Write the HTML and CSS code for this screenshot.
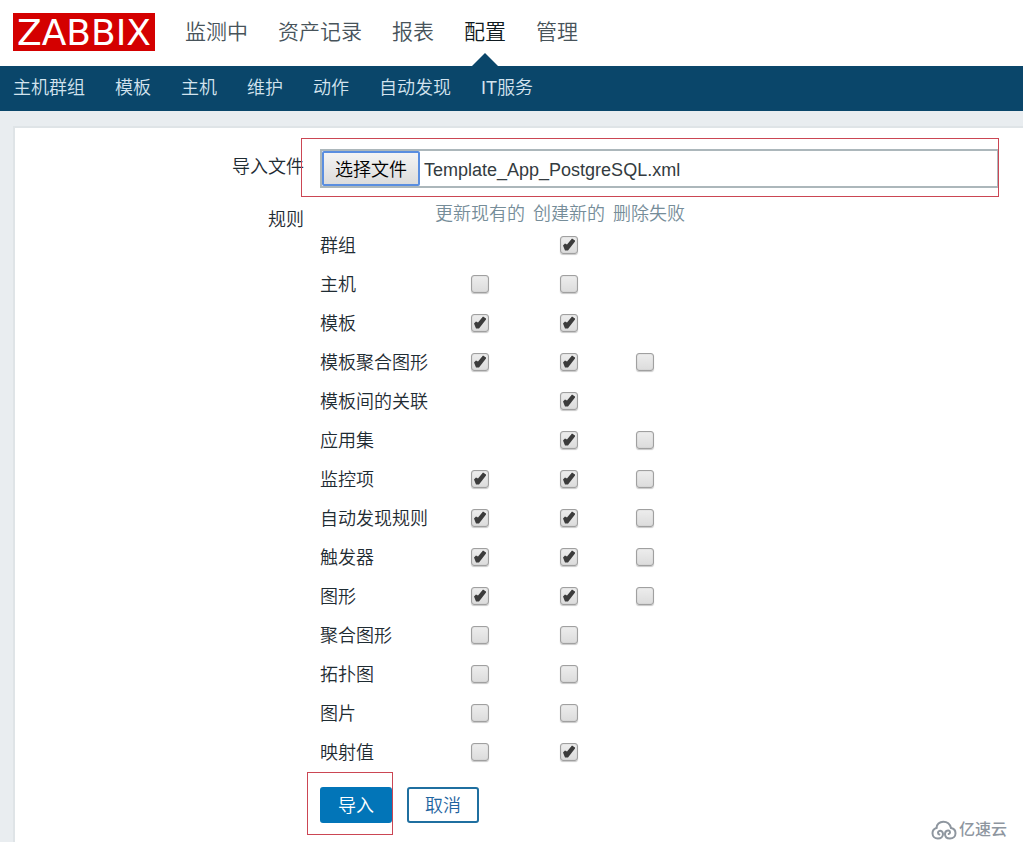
FILE: index.html
```html
<!DOCTYPE html>
<html lang="zh-CN">
<head>
<meta charset="utf-8">
<meta name="viewport" content="width=device-width, initial-scale=1">
<title>导入</title>
<link rel="stylesheet" href="styles.css">
</head>
<body>
<header class="top">
  <a class="logo" href="#">ZABBIX</a>
  <nav class="main-nav" aria-label="主菜单">
    <a href="#">监测中</a>
    <a href="#">资产记录</a>
    <a href="#">报表</a>
    <a class="active" href="#" aria-current="page">配置</a>
    <a href="#">管理</a>
  </nav>
</header>
<nav class="sub-nav" aria-label="配置">
  <a href="#">主机群组</a>
  <a href="#">模板</a>
  <a href="#">主机</a>
  <a href="#">维护</a>
  <a href="#">动作</a>
  <a href="#">自动发现</a>
  <a href="#">IT服务</a>
</nav>
<main class="page">
  <form class="card">
    <label class="name" for="import-file">导入文件</label>
    <div class="file-field">
      <div class="file-box">
        <input class="file-input" type="file" id="import-file">
        <label class="file-button" for="import-file">选择文件</label>
        <span class="file-name">Template_App_PostgreSQL.xml</span>
      </div>
      <div class="mark mark-file"></div>
    </div>
    <span class="name name-rules" id="rules">规则</span>
    <table class="rules" aria-labelledby="rules">
      <colgroup><col class="col-name"><col class="col-update"><col class="col-create"><col class="col-delete"></colgroup>
      <thead>
        <tr><td></td><th scope="col">更新现有的</th><th scope="col">创建新的</th><th scope="col">删除失败</th></tr>
      </thead>
      <tbody>
        <tr><th scope="row">群组</th><td></td><td><input type="checkbox" aria-label="群组 创建新的" checked></td><td></td></tr>
        <tr><th scope="row">主机</th><td><input type="checkbox" aria-label="主机 更新现有的"></td><td><input type="checkbox" aria-label="主机 创建新的"></td><td></td></tr>
        <tr><th scope="row">模板</th><td><input type="checkbox" aria-label="模板 更新现有的" checked></td><td><input type="checkbox" aria-label="模板 创建新的" checked></td><td></td></tr>
        <tr><th scope="row">模板聚合图形</th><td><input type="checkbox" aria-label="模板聚合图形 更新现有的" checked></td><td><input type="checkbox" aria-label="模板聚合图形 创建新的" checked></td><td><input type="checkbox" aria-label="模板聚合图形 删除失败"></td></tr>
        <tr><th scope="row">模板间的关联</th><td></td><td><input type="checkbox" aria-label="模板间的关联 创建新的" checked></td><td></td></tr>
        <tr><th scope="row">应用集</th><td></td><td><input type="checkbox" aria-label="应用集 创建新的" checked></td><td><input type="checkbox" aria-label="应用集 删除失败"></td></tr>
        <tr><th scope="row">监控项</th><td><input type="checkbox" aria-label="监控项 更新现有的" checked></td><td><input type="checkbox" aria-label="监控项 创建新的" checked></td><td><input type="checkbox" aria-label="监控项 删除失败"></td></tr>
        <tr><th scope="row">自动发现规则</th><td><input type="checkbox" aria-label="自动发现规则 更新现有的" checked></td><td><input type="checkbox" aria-label="自动发现规则 创建新的" checked></td><td><input type="checkbox" aria-label="自动发现规则 删除失败"></td></tr>
        <tr><th scope="row">触发器</th><td><input type="checkbox" aria-label="触发器 更新现有的" checked></td><td><input type="checkbox" aria-label="触发器 创建新的" checked></td><td><input type="checkbox" aria-label="触发器 删除失败"></td></tr>
        <tr><th scope="row">图形</th><td><input type="checkbox" aria-label="图形 更新现有的" checked></td><td><input type="checkbox" aria-label="图形 创建新的" checked></td><td><input type="checkbox" aria-label="图形 删除失败"></td></tr>
        <tr><th scope="row">聚合图形</th><td><input type="checkbox" aria-label="聚合图形 更新现有的"></td><td><input type="checkbox" aria-label="聚合图形 创建新的"></td><td></td></tr>
        <tr><th scope="row">拓扑图</th><td><input type="checkbox" aria-label="拓扑图 更新现有的"></td><td><input type="checkbox" aria-label="拓扑图 创建新的"></td><td></td></tr>
        <tr><th scope="row">图片</th><td><input type="checkbox" aria-label="图片 更新现有的"></td><td><input type="checkbox" aria-label="图片 创建新的"></td><td></td></tr>
        <tr><th scope="row">映射值</th><td><input type="checkbox" aria-label="映射值 更新现有的"></td><td><input type="checkbox" aria-label="映射值 创建新的" checked></td><td></td></tr>
      </tbody>
    </table>
    <div class="actions">
      <div class="submit">
        <button class="button primary" type="submit">导入</button>
        <div class="mark mark-submit"></div>
      </div>
      <button class="button" type="button">取消</button>
    </div>
  </form>
</main>
<div class="watermark">
  <svg width="26" height="20" viewBox="0 0 26 20" fill="none" stroke="currentColor" stroke-width="2" stroke-linecap="round" aria-hidden="true">
    <path d="M5.500 8C5.500 4.500 8.500 1.800 12.300 1.800S19 4.300 20 8"/>
    <path d="M5.500 8C3 8.700 1.500 10.800 1.500 13.200c0 3 2.300 5.300 5.300 5.300 3.200 0 5.200-2 5.200-4.500S10 10.500 8.300 11s-1.800 3.200 0 3.500"/>
    <path d="M20 8c2.600.5 4.500 2.600 4.500 5.200 0 3-2.300 5.300-5.500 5.300s-5-2-5-4.500 2-4 3.700-3.500 1.800 3.200 0 3.500"/>
  </svg>
  <span>亿速云</span>
</div>
</body>
</html>
```
FILE: styles.css
```css
* {
  box-sizing: border-box;
}

body {
  margin: 0;
  min-height: 100vh;
  display: flex;
  flex-direction: column;
  position: relative;
  background: #e9edf0;
  color: #1f2c33;
  font-family: "Liberation Sans", "Noto Sans CJK SC", sans-serif;
  font-size: 18px;
  font-weight: 350;
  line-height: 24px;
}

a {
  color: inherit;
  text-decoration: none;
}

.top {
  display: flex;
  align-items: flex-start;
  gap: 30px;
  height: 66px;
  padding: 0 13px;
  background: #fff;
}

.logo {
  height: 38px;
  margin-top: 13px;
  padding: 0 4px;
  background: #d40000;
  color: #fff;
  font-family: "DejaVu Sans", sans-serif;
  font-size: 36px;
  font-weight: 400;
  line-height: 39px;
}

.main-nav {
  display: flex;
  gap: 30px;
  align-self: stretch;
  color: #47535a;
  font-size: 21px;
  line-height: 64px;
}

.main-nav .active {
  position: relative;
  color: #0f1a20;
}

.main-nav .active::after {
  content: "";
  position: absolute;
  bottom: 0;
  left: 50%;
  margin-left: -13px;
  border: solid transparent;
  border-width: 0 13px 13px;
  border-bottom-color: #0a466a;
}

.sub-nav {
  display: flex;
  gap: 30px;
  height: 45px;
  padding: 0 13px;
  background: #0a466a;
  color: #d3e3ee;
  line-height: 45px;
}

.page {
  flex: 1;
  display: flex;
  padding: 15px 0 0 13px;
}

.card {
  flex: 1;
  display: grid;
  grid-template-columns: 289px 1fr;
  grid-template-rows: auto auto 1fr;
  column-gap: 16px;
  padding: 21px 24px 6px 0;
  border: solid #dfe4e7;
  border-width: 2px 0 0 2px;
  background: #fff;
}

.name {
  padding-top: 6px;
  text-align: right;
}

.name-rules {
  padding-top: 20px;
}

.file-field,
.submit {
  position: relative;
}

.file-box {
  display: flex;
  align-items: center;
  gap: 4px;
  height: 39px;
  border: 2px solid #acb7bb;
}

.file-input {
  position: absolute;
  width: 1px;
  height: 1px;
  opacity: 0;
}

.file-button {
  height: 35px;
  padding: 0 11px;
  border: 2px solid #5a8ee0;
  border-radius: 2px;
  background: linear-gradient(#f4f4f4, #dcdcdc);
  color: #000;
  line-height: 34px;
  white-space: nowrap;
}

.file-name {
  padding-top: 2px;
  color: #333b40;
}

.mark {
  position: absolute;
  border: 1px solid #cb4654;
  pointer-events: none;
}

.mark-file {
  inset: -11px 0 -9px -19px;
}

.mark-submit {
  inset: -15px -1px -12px -13px;
}

.rules {
  width: 369px;
  margin-top: 13px;
  border-collapse: collapse;
  table-layout: fixed;
}

.rules th,
.rules td {
  padding: 0;
  font-weight: 350;
  text-align: center;
  white-space: nowrap;
}

.rules thead th {
  height: 25px;
  color: #768d99;
}

.rules tbody th {
  height: 39px;
  text-align: left;
}

.rules tbody td {
  padding-bottom: 2px;
}

.rules td:last-child {
  padding-right: 8px;
}

.col-name {
  width: 111px;
}

.col-update {
  width: 98px;
}

.col-create,
.col-delete {
  width: 80px;
}

.rules input {
  appearance: none;
  display: block;
  width: 18px;
  height: 18px;
  margin: 0 auto;
  border: 1px solid #a0a0a0;
  border-radius: 3px;
  background: linear-gradient(#ededed, #dcdcdc);
  box-shadow: 0 1px 1px #c8c8c8, inset 0 0 1px #a0a0a0;
}

.rules input:checked::before {
  content: "";
  display: block;
  width: 16px;
  height: 16px;
  background: #3c3c3c;
  clip-path: polygon(2px 9px, 4px 7px, 6px 8px, 11px 2px, 14px 4px, 14px 5px, 7px 14px, 4px 14px);
}

.actions {
  grid-column: 2;
  display: flex;
  align-items: flex-start;
  gap: 15px;
  margin-top: 15px;
}

.button {
  display: block;
  width: 72px;
  height: 36px;
  padding: 2px 0 0;
  border: 2px solid #1f6fa0;
  border-radius: 3px;
  background: #fff;
  color: #1f65a0;
  font: inherit;
}

.primary {
  border-color: #0275b8;
  background: #0275b8;
  color: #fff;
}

.watermark {
  position: absolute;
  right: 16px;
  bottom: 0;
  display: flex;
  align-items: center;
  gap: 2px;
  color: #8e969f;
  font-size: 16px;
  font-weight: 500;
}
```
